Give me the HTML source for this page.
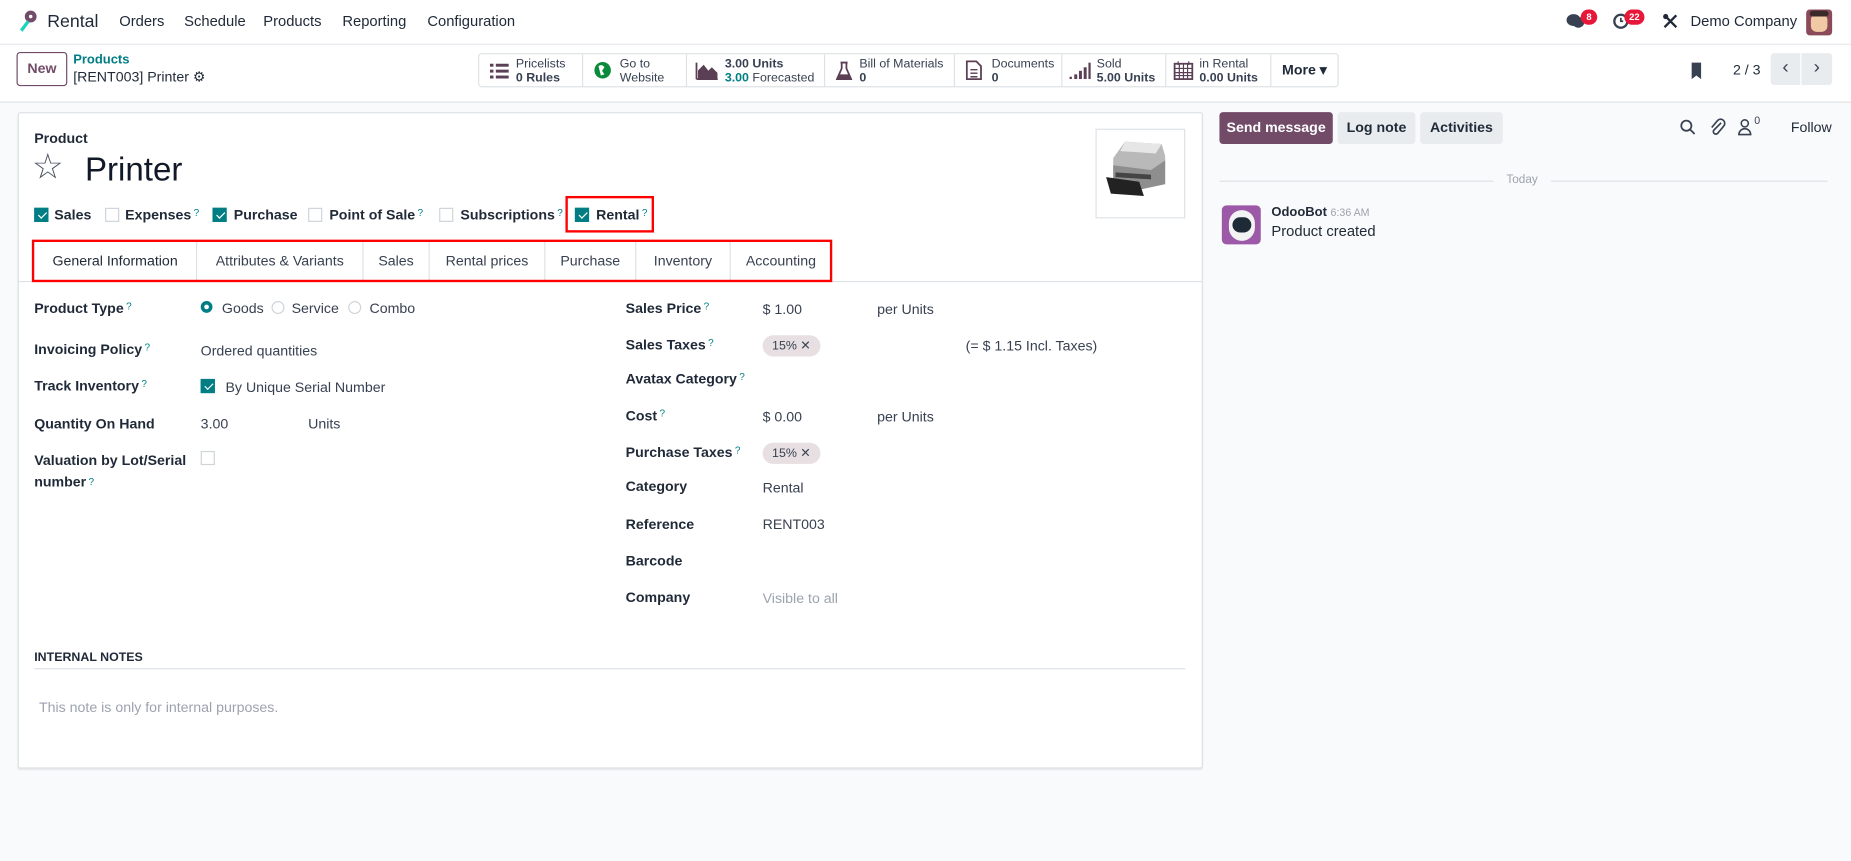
<!DOCTYPE html>
<html><head><meta charset="utf-8">
<style>
html,body{margin:0;padding:0;width:1851px;height:861px;overflow:hidden;background:#f9fafb;}
#w{position:absolute;left:0;top:0;width:1568px;height:729px;transform:scale(1.1805);transform-origin:0 0;font-family:"Liberation Sans",sans-serif;font-size:12px;color:#374151;background:#f9fafb;}
.a{position:absolute;white-space:nowrap;}
.b{font-weight:bold;color:#1f2937;}
.q{color:#017e84;font-size:8.5px;vertical-align:top;margin-left:2px;font-weight:normal;}
.cb{position:absolute;width:12px;height:12px;border:1px solid #ced4da;background:#fff;box-sizing:border-box;}
.cb.on{background:#017e84;border-color:#017e84;}
.cb.on:after{content:"";position:absolute;left:3.5px;top:1px;width:3px;height:6px;border:solid #fff;border-width:0 1.5px 1.5px 0;transform:rotate(45deg);}
.stat{position:absolute;top:0;height:28px;border-right:1px solid #dee2e6;font-size:10.5px;line-height:12px;color:#374151;}
.stat .t{position:absolute;top:2px;}
.tab{position:absolute;top:0;height:33px;line-height:33px;text-align:center;border-right:1px solid #dee2e6;font-size:12px;color:#374151;}
.tag{position:absolute;background:#e7dfe1;border-radius:9px;height:18px;line-height:18px;padding:0 8px;font-size:10.5px;}
.gb{position:absolute;top:95px;height:27px;line-height:27px;border-radius:3px;background:#e9ecef;font-weight:bold;font-size:12px;text-align:center;color:#1f2937;}
.nv{position:absolute;top:11px;font-size:12.5px;color:#1f2937;}
</style></head><body><div id="w">
<div class="a" style="left:0;top:0;width:1568px;height:37px;background:#fff;border-bottom:1px solid #e5e7eb;"></div>
<svg class="a" style="left:14px;top:8px" width="19" height="20" viewBox="0 0 19 20"><circle cx="12" cy="6" r="5" fill="#714b67"/><circle cx="12" cy="6" r="1.5" fill="#fff"/><path d="M9 9 L3 17 L5 19 L11 11Z" fill="#1ad3c1"/></svg>
<div class="a" style="left:40px;top:10px;font-size:15px;color:#1f2937;">Rental</div>
<div class="nv" style="left:101px;">Orders</div>
<div class="nv" style="left:156px;">Schedule</div>
<div class="nv" style="left:223px;">Products</div>
<div class="nv" style="left:290px;">Reporting</div>
<div class="nv" style="left:362px;">Configuration</div>
<svg class="a" style="left:1327px;top:11px" width="16" height="14" viewBox="0 0 16 14"><ellipse cx="6" cy="6" rx="6" ry="5" fill="#374151"/><ellipse cx="10" cy="8" rx="5" ry="4.5" fill="#374151"/></svg>
<div class="a" style="left:1339px;top:8px;width:14px;height:13px;border-radius:7px;background:#e8173a;color:#fff;font-size:8px;line-height:13px;text-align:center;font-weight:bold;">8</div>
<svg class="a" style="left:1366px;top:11px" width="14" height="14" viewBox="0 0 14 14"><circle cx="7" cy="7" r="5.5" fill="none" stroke="#374151" stroke-width="2"/><path d="M7 4v3h2" stroke="#374151" stroke-width="1.5" fill="none"/></svg>
<div class="a" style="left:1376px;top:8px;width:17px;height:13px;border-radius:7px;background:#e8173a;color:#fff;font-size:8px;line-height:13px;text-align:center;font-weight:bold;">22</div>
<svg class="a" style="left:1408px;top:11px" width="14" height="14" viewBox="0 0 14 14"><path d="M2 2 L12 12 M12 2 L2 12" stroke="#1f2937" stroke-width="2"/><circle cx="3" cy="3" r="2.2" fill="#1f2937"/></svg>
<div class="a" style="left:1432px;top:11px;font-size:12.5px;color:#1f2937;">Demo Company</div>
<div class="a" style="left:1530px;top:8px;width:22px;height:22px;background:#8b4a5a;border-radius:3px;"><div style="position:absolute;left:4px;top:4px;width:14px;height:15px;background:#f1c9a5;border-radius:5px;"></div><div style="position:absolute;left:3px;top:1px;width:16px;height:5px;background:#3a2a2a;border-radius:3px;"></div></div>
<div class="a" style="left:0;top:38px;width:1568px;height:48px;background:#fff;border-bottom:1px solid #dee2e6;"></div>
<div class="a" style="left:14px;top:44px;width:41px;height:27px;border:1px solid #714b67;border-radius:3px;text-align:center;line-height:27px;font-weight:bold;color:#714b67;font-size:12px;">New</div>
<div class="a" style="left:62px;top:45px;font-size:11px;color:#017e84;font-weight:bold;">Products</div>
<div class="a" style="left:62px;top:58px;font-size:12px;color:#1f2937;">[RENT003] Printer ⚙</div>
<div class="a" style="left:405px;top:45px;width:727px;height:27px;border:1px solid #dee2e6;border-radius:3px;background:#fff;">
 <div class="stat" style="left:0;width:87px;"><svg class="a" style="left:9px;top:7px" width="16" height="14"><g fill="#5a3f55"><rect x="0" y="1" width="3" height="2.5"/><rect x="5" y="1" width="11" height="2.5"/><rect x="0" y="6" width="3" height="2.5"/><rect x="5" y="6" width="11" height="2.5"/><rect x="0" y="11" width="3" height="2.5"/><rect x="5" y="11" width="11" height="2.5"/></g></svg><div class="t" style="left:31px;">Pricelists<br><b>0 Rules</b></div></div>
 <div class="stat" style="left:88px;width:87px;"><svg class="a" style="left:9px;top:6px" width="15" height="15"><circle cx="7.5" cy="7.5" r="7" fill="#0c8a3c"/><path d="M4 4 Q7 2 9 5 L7 8 L9 11 L6 12 L5 8Z" fill="#fff"/></svg><div class="t" style="left:31px;">Go to<br>Website</div></div>
 <div class="stat" style="left:176px;width:116px;"><svg class="a" style="left:7px;top:6px" width="20" height="16"><path d="M1 15 L1 1 M1 15 L19 15 M3 14 L3 8 L7 4 L11 9 L14 6 L18 10 L18 14Z" stroke="#5a3f55" stroke-width="1.5" fill="#5a3f55"/></svg><div class="t" style="left:32px;"><b>3.00 Units</b><br><b style="color:#017e84">3.00</b> Forecasted</div></div>
 <div class="stat" style="left:293px;width:109px;"><svg class="a" style="left:9px;top:6px" width="14" height="16"><path d="M4 1h6M5 1v5L1 15h12L9 6V1" stroke="#5a3f55" stroke-width="1.5" fill="none"/><path d="M3 11h8l2 4H1z" fill="#5a3f55"/></svg><div class="t" style="left:29px;">Bill of Materials<br><b>0</b></div></div>
 <div class="stat" style="left:403px;width:90px;"><svg class="a" style="left:9px;top:5px" width="14" height="17"><path d="M1 1h8l4 4v11H1z" stroke="#5a3f55" stroke-width="1.5" fill="none"/><path d="M4 8h6M4 11h6M4 14h6" stroke="#5a3f55" stroke-width="1.2"/></svg><div class="t" style="left:31px;">Documents<br><b>0</b></div></div>
 <div class="stat" style="left:494px;width:87px;"><svg class="a" style="left:6px;top:7px" width="18" height="14"><g fill="#5a3f55"><rect x="0" y="12" width="2" height="2"/><rect x="4" y="10" width="2.5" height="4"/><rect x="8" y="7" width="2.5" height="7"/><rect x="12" y="4" width="2.5" height="10"/><rect x="16" y="0" width="2" height="14"/></g></svg><div class="t" style="left:29px;">Sold<br><b>5.00 Units</b></div></div>
 <div class="stat" style="left:582px;width:88px;"><svg class="a" style="left:6px;top:5px" width="17" height="17"><rect x="1" y="3" width="15" height="13" fill="none" stroke="#5a3f55" stroke-width="1.5"/><path d="M1 7h15M1 10.5h15M1 13h15M5 3v13M8.5 3v13M12 3v13M4 1v3M13 1v3" stroke="#5a3f55" stroke-width="1"/></svg><div class="t" style="left:28px;">in Rental<br><b>0.00 Units</b></div></div>
 <div class="stat" style="left:671px;width:56px;border:none;"><div class="t" style="left:9px;top:7px;font-size:12px;font-weight:bold;color:#1f2937;">More ▾</div></div>
</div>
<svg class="a" style="left:1432px;top:52px" width="11" height="16"><path d="M1 1h8v14l-4-3-4 3z" fill="#374151"/></svg>
<div class="a" style="left:1468px;top:52px;font-size:12px;color:#1f2937;">2 / 3</div>
<div class="a" style="left:1500px;top:45px;width:25px;height:27px;background:#e9ecef;border-radius:3px 0 0 3px;text-align:center;line-height:26px;font-size:16px;">‹</div>
<div class="a" style="left:1526px;top:45px;width:26px;height:27px;background:#e9ecef;border-radius:0 3px 3px 0;text-align:center;line-height:26px;font-size:16px;">›</div>
<div class="a" style="left:15px;top:95px;width:1002px;height:554px;background:#fff;border:1px solid #dee2e6;border-radius:2px;box-shadow:0 1px 1px rgba(0,0,0,.08);"></div>
<div class="a b" style="left:29px;top:110px;font-size:12px;">Product</div>
<div class="a" style="left:27px;top:124px;font-size:30px;color:#4b5563;">☆</div>
<div class="a" style="left:72px;top:128px;font-size:28px;color:#111827;">Printer</div>
<div class="a" style="left:928px;top:109px;width:76px;height:76px;border:1px solid #dee2e6;box-sizing:border-box;background:#fff;">
<svg width="74" height="74"><path d="M14 24 L24 10 L55 12 L58 22 L58 46 L30 52 L14 46Z" fill="#b9b9b9"/><path d="M24 10 L55 12 L50 20 L20 18Z" fill="#e6e6e6"/><path d="M14 30 L46 34 L58 26 L58 46 L30 52 L14 46Z" fill="#8e8e8e"/><path d="M8 40 L36 44 L40 56 L12 54Z" fill="#222"/><path d="M16 36 L46 38 L46 42 L16 40Z" fill="#444"/></svg></div>
<div class="cb on" style="left:29px;top:176px"></div><div class="a b" style="left:46px;top:175px">Sales</div>
<div class="cb" style="left:89px;top:176px"></div><div class="a b" style="left:106px;top:175px">Expenses<span class="q">?</span></div>
<div class="cb on" style="left:180px;top:176px"></div><div class="a b" style="left:198px;top:175px">Purchase</div>
<div class="cb" style="left:261px;top:176px"></div><div class="a b" style="left:279px;top:175px">Point of Sale<span class="q">?</span></div>
<div class="cb" style="left:372px;top:176px"></div><div class="a b" style="left:390px;top:175px">Subscriptions<span class="q">?</span></div>
<div class="cb on" style="left:487px;top:176px"></div><div class="a b" style="left:505px;top:175px">Rental<span class="q">?</span></div>
<div class="a" style="left:479px;top:166px;width:71px;height:27px;border:2px solid #f00;"></div>
<div class="a" style="left:15px;top:238px;width:1003px;height:1px;background:#dee2e6;"></div>
<div class="a" style="left:29px;top:205px;width:675px;height:33px;">
<div class="tab" style="left:0;width:137px;color:#1f2937;">General Information</div>
<div class="tab" style="left:138px;width:140px;">Attributes &amp; Variants</div>
<div class="tab" style="left:279px;width:55px;">Sales</div>
<div class="tab" style="left:335px;width:97px;">Rental prices</div>
<div class="tab" style="left:433px;width:76px;">Purchase</div>
<div class="tab" style="left:510px;width:79px;">Inventory</div>
<div class="tab" style="left:590px;width:85px;border:none;">Accounting</div>
</div>
<div class="a" style="left:27px;top:203px;width:674px;height:32px;border:2px solid #f00;"></div>
<div class="a b" style="left:29px;top:254px">Product Type<span class="q">?</span></div>
<div class="a" style="left:170px;top:255px;width:10px;height:10px;border:3px solid #017e84;border-radius:50%;box-sizing:border-box;"></div><div class="a" style="left:188px;top:254px">Goods</div>
<div class="a" style="left:230px;top:255px;width:11px;height:11px;border:1px solid #ced4da;border-radius:50%;box-sizing:border-box;"></div><div class="a" style="left:247px;top:254px">Service</div>
<div class="a" style="left:295px;top:255px;width:11px;height:11px;border:1px solid #ced4da;border-radius:50%;box-sizing:border-box;"></div><div class="a" style="left:313px;top:254px">Combo</div>
<div class="a b" style="left:29px;top:289px">Invoicing Policy<span class="q">?</span></div>
<div class="a" style="left:170px;top:290px">Ordered quantities</div>
<div class="a b" style="left:29px;top:320px">Track Inventory<span class="q">?</span></div>
<div class="cb on" style="left:170px;top:321px"></div><div class="a" style="left:191px;top:321px">By Unique Serial Number</div>
<div class="a b" style="left:29px;top:352px">Quantity On Hand</div>
<div class="a" style="left:170px;top:352px">3.00</div><div class="a" style="left:261px;top:352px">Units</div>
<div class="a b" style="left:29px;top:381px;line-height:18px;">Valuation by Lot/Serial<br>number<span class="q">?</span></div>
<div class="cb" style="left:170px;top:382px"></div>
<div class="a b" style="left:530px;top:254px">Sales Price<span class="q">?</span></div>
<div class="a" style="left:646px;top:255px">$ 1.00</div><div class="a" style="left:743px;top:255px">per Units</div>
<div class="a b" style="left:530px;top:285px">Sales Taxes<span class="q">?</span></div>
<div class="tag" style="left:646px;top:284px">15% ✕</div>
<div class="a" style="left:818px;top:286px">(= $ 1.15 Incl. Taxes)</div>
<div class="a b" style="left:530px;top:314px">Avatax Category<span class="q">?</span></div>
<div class="a b" style="left:530px;top:345px">Cost<span class="q">?</span></div>
<div class="a" style="left:646px;top:346px">$ 0.00</div><div class="a" style="left:743px;top:346px">per Units</div>
<div class="a b" style="left:530px;top:376px">Purchase Taxes<span class="q">?</span></div>
<div class="tag" style="left:646px;top:375px">15% ✕</div>
<div class="a b" style="left:530px;top:405px">Category</div><div class="a" style="left:646px;top:406px">Rental</div>
<div class="a b" style="left:530px;top:437px">Reference</div><div class="a" style="left:646px;top:437px">RENT003</div>
<div class="a b" style="left:530px;top:468px">Barcode</div>
<div class="a b" style="left:530px;top:499px">Company</div><div class="a" style="left:646px;top:500px;color:#9ca3af">Visible to all</div>
<div class="a b" style="left:29px;top:551px;font-size:10.5px;">INTERNAL NOTES</div>
<div class="a" style="left:29px;top:566px;width:975px;height:1px;background:#dee2e6;"></div>
<div class="a" style="left:33px;top:592px;color:#9ca3af;">This note is only for internal purposes.</div>
<div class="a" style="left:1033px;top:95px;width:96px;height:27px;line-height:27px;background:#714b67;color:#fff;border-radius:3px;text-align:center;font-weight:bold;font-size:12px;">Send message</div>
<div class="gb" style="left:1133px;width:66px;">Log note</div>
<div class="gb" style="left:1203px;width:70px;">Activities</div>
<svg class="a" style="left:1423px;top:101px" width="13" height="13"><circle cx="5.5" cy="5.5" r="4.3" fill="none" stroke="#374151" stroke-width="1.5"/><path d="M8.5 8.5l4 4" stroke="#374151" stroke-width="1.5"/></svg>
<svg class="a" style="left:1448px;top:100px" width="14" height="15"><path d="M10 4 L4 10 a2 2 0 0 0 3 3 L12 7 a3.5 3.5 0 0 0 -5 -5 L2 8" fill="none" stroke="#374151" stroke-width="1.4"/></svg>
<svg class="a" style="left:1472px;top:100px" width="12" height="15"><circle cx="6" cy="4.5" r="3" fill="none" stroke="#374151" stroke-width="1.3"/><path d="M1 14 a5 5 0 0 1 10 0z" fill="none" stroke="#374151" stroke-width="1.3"/></svg>
<div class="a" style="left:1486px;top:97px;font-size:9px">0</div>
<div class="a" style="left:1517px;top:101px;color:#1f2937;">Follow</div>
<div class="a" style="left:1033px;top:153px;width:232px;height:1px;background:#dee2e6;"></div>
<div class="a" style="left:1276px;top:147px;font-size:10px;color:#9ca3af;">Today</div>
<div class="a" style="left:1314px;top:153px;width:234px;height:1px;background:#dee2e6;"></div>
<div class="a" style="left:1035px;top:174px;width:33px;height:33px;border-radius:4px;background:#9b59a8;overflow:hidden;"><div style="position:absolute;left:6px;top:4px;width:22px;height:26px;border-radius:11px;background:#f3f3f3;"></div><div style="position:absolute;left:9px;top:10px;width:16px;height:13px;border-radius:7px;background:#1e2a36;"></div></div>
<div class="a b" style="left:1077px;top:174px;font-size:11px;">OdooBot <span style="font-weight:normal;font-size:9px;color:#9ca3af">6:36 AM</span></div>
<div class="a" style="left:1077px;top:189px;font-size:12.5px;color:#1f2937;">Product created</div>
</div></body></html>
